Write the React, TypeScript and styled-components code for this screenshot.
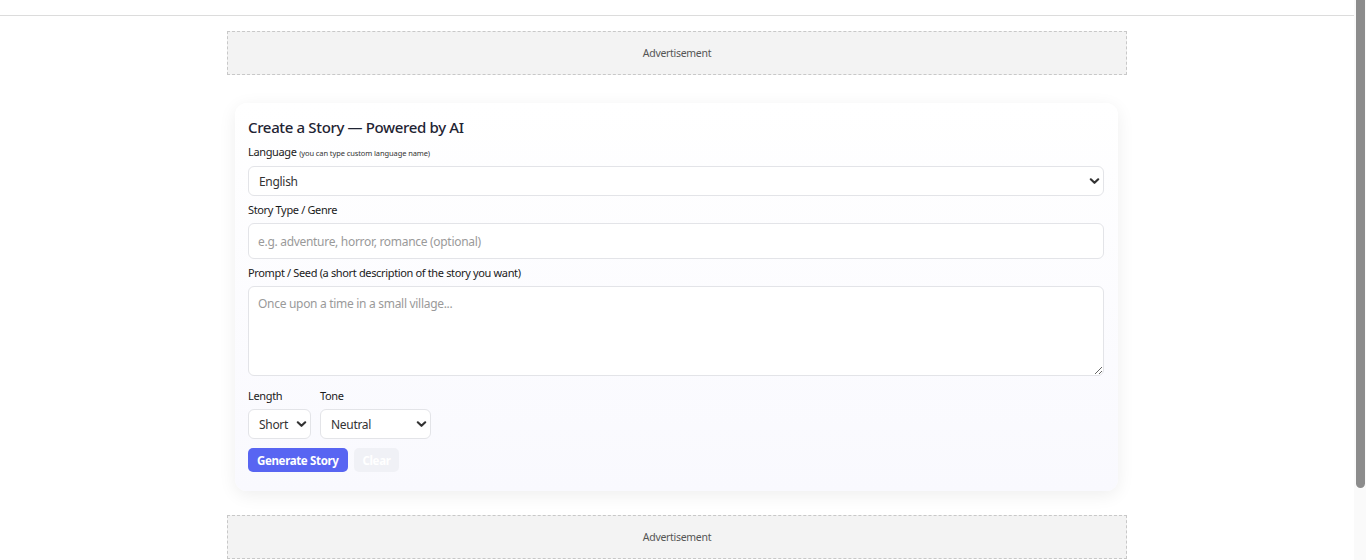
import React from "react";
import styled, { createGlobalStyle } from "styled-components";

const Global = createGlobalStyle`
  html, body { margin: 0; padding: 0; background: #ffffff; }
  body { font-family: "Noto Sans", "Open Sans", Arial, sans-serif; color: #1f2937; }
  * { box-sizing: border-box; }
`;

const Page = styled.div`
  min-height: 644px;
  margin-right: 12px;
  display: flex;
  flex-direction: column;
`;

const ScrollTrack = styled.div`
  position: fixed;
  top: 0;
  right: 0;
  width: 12px;
  height: 100vh;
  background: #fafafa;
  display: flex;
  justify-content: center;
`;

const ScrollThumb = styled.div`
  width: 9px;
  height: 488px;
  margin-left: 1px;
  background: #8c8c8c;
  border-radius: 0 0 5px 5px;
`;

const TopBar = styled.header`
  height: 16px;
  border-bottom: 1px solid #dcdcdc;
  background: #fff;
`;

const Main = styled.main`
  width: 900px;
  margin: 0 auto;
  padding-top: 15px;
  display: flex;
  flex-direction: column;
`;

const AdSlot = styled.div`
  height: 44px;
  border: 1px dashed #c8c8c8;
  background: #f3f3f3;
  display: flex;
  align-items: center;
  justify-content: center;
  font-size: 10.5px;
  color: #555;
  letter-spacing: -0.3px;
`;

const Card = styled.section`
  margin: 28px 9px 24px 8px;
  padding: 14px 14px 19px 13px;
  border-radius: 12px;
  background: linear-gradient(180deg, #ffffff 0%, #f9f9fe 100%);
  box-shadow: 0 4px 18px rgba(0, 0, 0, 0.07);
  display: flex;
  flex-direction: column;
`;

const Title = styled.h2`
  margin: 0 0 7px;
  font-size: 15px;
  line-height: 20px;
  font-weight: 500;
  letter-spacing: -0.35px;
  color: #1f2433;
`;

const Label = styled.label<{ $mt?: number }>`
  display: block;
  font-size: 11px;
  line-height: 16px;
  letter-spacing: -0.35px;
  color: #1a1a1a;
  margin: ${(p) => p.$mt ?? 0}px 0 5px;
`;

const Hint = styled.small`
  font-size: 7.5px;
  letter-spacing: -0.1px;
  color: #333;
`;

const SelectWrap = styled.div<{ $w?: string }>`
  position: relative;
  width: ${(p) => p.$w ?? "100%"};
`;

const Select = styled.select<{ $pr?: number }>`
  appearance: none;
  -webkit-appearance: none;
  width: 100%;
  height: 30px;
  padding: 0 ${(p) => p.$pr ?? 24}px 0 10px;
  border: 1px solid #e3e4e8;
  border-radius: 6px;
  background: #fff;
  font-family: inherit;
  font-size: 12px;
  letter-spacing: -0.3px;
  color: #333;
`;

const Chevron = styled.svg`
  position: absolute;
  right: 4px;
  top: 50%;
  transform: translateY(-50%);
  width: 11px;
  height: 8px;
  pointer-events: none;
`;

const Input = styled.input`
  width: 100%;
  height: 36px;
  padding: 0 9px;
  border: 1px solid #e3e4e8;
  border-radius: 6px;
  background: #fff;
  font-family: inherit;
  font-size: 12px;
  letter-spacing: -0.3px;
  color: #333;
  &::placeholder { color: #9a9a9a; }
`;

const TextArea = styled.textarea`
  width: 100%;
  height: 90px;
  padding: 8px 9px;
  border: 1px solid #e3e4e8;
  border-radius: 6px;
  background: #fff;
  font-family: inherit;
  font-size: 12px;
  letter-spacing: -0.3px;
  color: #333;
  resize: vertical;
  display: block;
  &::placeholder { color: #9a9a9a; }
`;

const Row = styled.div<{ $gap: number; $mt?: number }>`
  display: flex;
  gap: ${(p) => p.$gap}px;
  margin-top: ${(p) => p.$mt ?? 0}px;
`;

const Field = styled.div`
  display: flex;
  flex-direction: column;
`;

const Button = styled.button<{ $primary?: boolean }>`
  height: 24px;
  padding: 0 9px;
  border: none;
  border-radius: 5px;
  font-family: inherit;
  font-size: 11.5px;
  font-weight: 700;
  letter-spacing: -0.35px;
  color: #fff;
  background: ${(p) => (p.$primary ? "#5865f2" : "#f0f1f6")};
  cursor: pointer;
`;

const ChevronIcon = () => (
  <Chevron viewBox="0 0 11 8">
    <path d="M1.8 2.3 L5.5 5.8 L9.2 2.3" fill="none" stroke="#333" strokeWidth="2.2" strokeLinecap="round" strokeLinejoin="round" />
  </Chevron>
);

export default function App() {
  return (
    <Page>
      <Global />
      <TopBar />
      <Main>
        <AdSlot>Advertisement</AdSlot>
        <Card>
          <Title>Create a Story — Powered by AI</Title>
          <Label>
            Language <Hint>(you can type custom language name)</Hint>
          </Label>
          <SelectWrap>
            <Select defaultValue="English">
              <option>English</option>
            </Select>
            <ChevronIcon />
          </SelectWrap>
          <Label $mt={6}>Story Type / Genre</Label>
          <Input placeholder="e.g. adventure, horror, romance (optional)" />
          <Label $mt={6}>Prompt / Seed (a short description of the story you want)</Label>
          <TextArea placeholder="Once upon a time in a small village..." />
          <Row $gap={9} $mt={12}>
            <Field>
              <Label>Length</Label>
              <SelectWrap $w="63px">
                <Select defaultValue="Short" $pr={14}>
                  <option>Short</option>
                </Select>
                <ChevronIcon />
              </SelectWrap>
            </Field>
            <Field>
              <Label>Tone</Label>
              <SelectWrap $w="111px">
                <Select defaultValue="Neutral">
                  <option>Neutral</option>
                </Select>
                <ChevronIcon />
              </SelectWrap>
            </Field>
          </Row>
          <Row $gap={6} $mt={9}>
            <Button $primary>Generate Story</Button>
            <Button>Clear</Button>
          </Row>
        </Card>
        <AdSlot>Advertisement</AdSlot>
      </Main>
      <ScrollTrack>
        <ScrollThumb />
      </ScrollTrack>
    </Page>
  );
}
